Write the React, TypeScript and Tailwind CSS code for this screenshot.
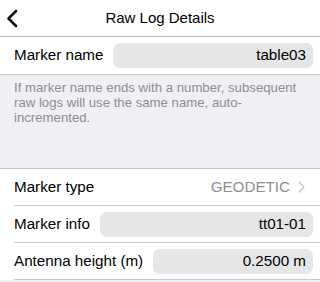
import React from "react";

function Row({ label, value }: { label: string; value: string }) {
  return (
    <div className="flex h-[37px] items-center pl-[14px]">
      <div className="flex h-full flex-1 items-center gap-[10px] border-b border-[#c8c7cc] pr-[7px]">
        <span className="shrink-0 text-[15.2px] text-black">{label}</span>
        <div className="flex h-[25px] flex-1 items-center justify-end rounded-[7px] bg-[#e6e6e8] px-[7px] text-[15.2px] text-black">
          {value}
        </div>
      </div>
    </div>
  );
}

export default function App() {
  return (
    <div
      className="h-[282px] w-[320px] overflow-hidden bg-[#efeff4]"
      style={{ fontFamily: '"Liberation Sans", Arial, sans-serif' }}
    >
      <div className="relative flex h-[37px] items-center justify-center border-b border-[#b8b8bc] bg-white">
        <svg className="absolute left-[5px] top-[9px]" width="14" height="19" viewBox="0 0 14 19">
          <path d="M11 2 L3.5 9.5 L11 17" fill="none" stroke="#111" strokeWidth="2.6" strokeLinecap="round" strokeLinejoin="round" />
        </svg>
        <span className="text-[15px] text-black">Raw Log Details</span>
      </div>

      <div className="flex h-[38px] items-center gap-[10px] border-b border-[#c8c7cc] bg-white pl-[14px] pr-[7px]">
        <span className="shrink-0 text-[15.2px] text-black">Marker name</span>
        <div className="flex h-[25px] flex-1 items-center justify-end rounded-[7px] bg-[#e6e6e8] px-[7px] text-[15.2px] text-black">
          table03
        </div>
      </div>

      <div className="h-[93px] px-[14px] pt-[5px] text-[13.2px] leading-[15px] text-[#8e8e93]">
        If marker name ends with a number, subsequent raw logs will use the same name, auto-incremented.
      </div>

      <div className="border-t border-[#c8c7cc] bg-white">
        <div className="flex h-[37px] items-center pl-[14px]">
          <div className="flex h-full flex-1 items-center justify-between border-b border-[#c8c7cc] pr-[15px]">
            <span className="text-[15.2px] text-black">Marker type</span>
            <div className="flex items-center gap-[8px]">
              <span className="text-[15.2px] text-[#8e8e93]">GEODETIC</span>
              <svg width="7" height="12" viewBox="0 0 7 12">
                <path d="M1 1 L6 6 L1 11" fill="none" stroke="#c4c4c8" strokeWidth="1.4" strokeLinecap="round" strokeLinejoin="round" />
              </svg>
            </div>
          </div>
        </div>
        <Row label="Marker info" value="tt01-01" />
        <Row label="Antenna height (m)" value="0.2500 m" />
      </div>
    </div>
  );
}
